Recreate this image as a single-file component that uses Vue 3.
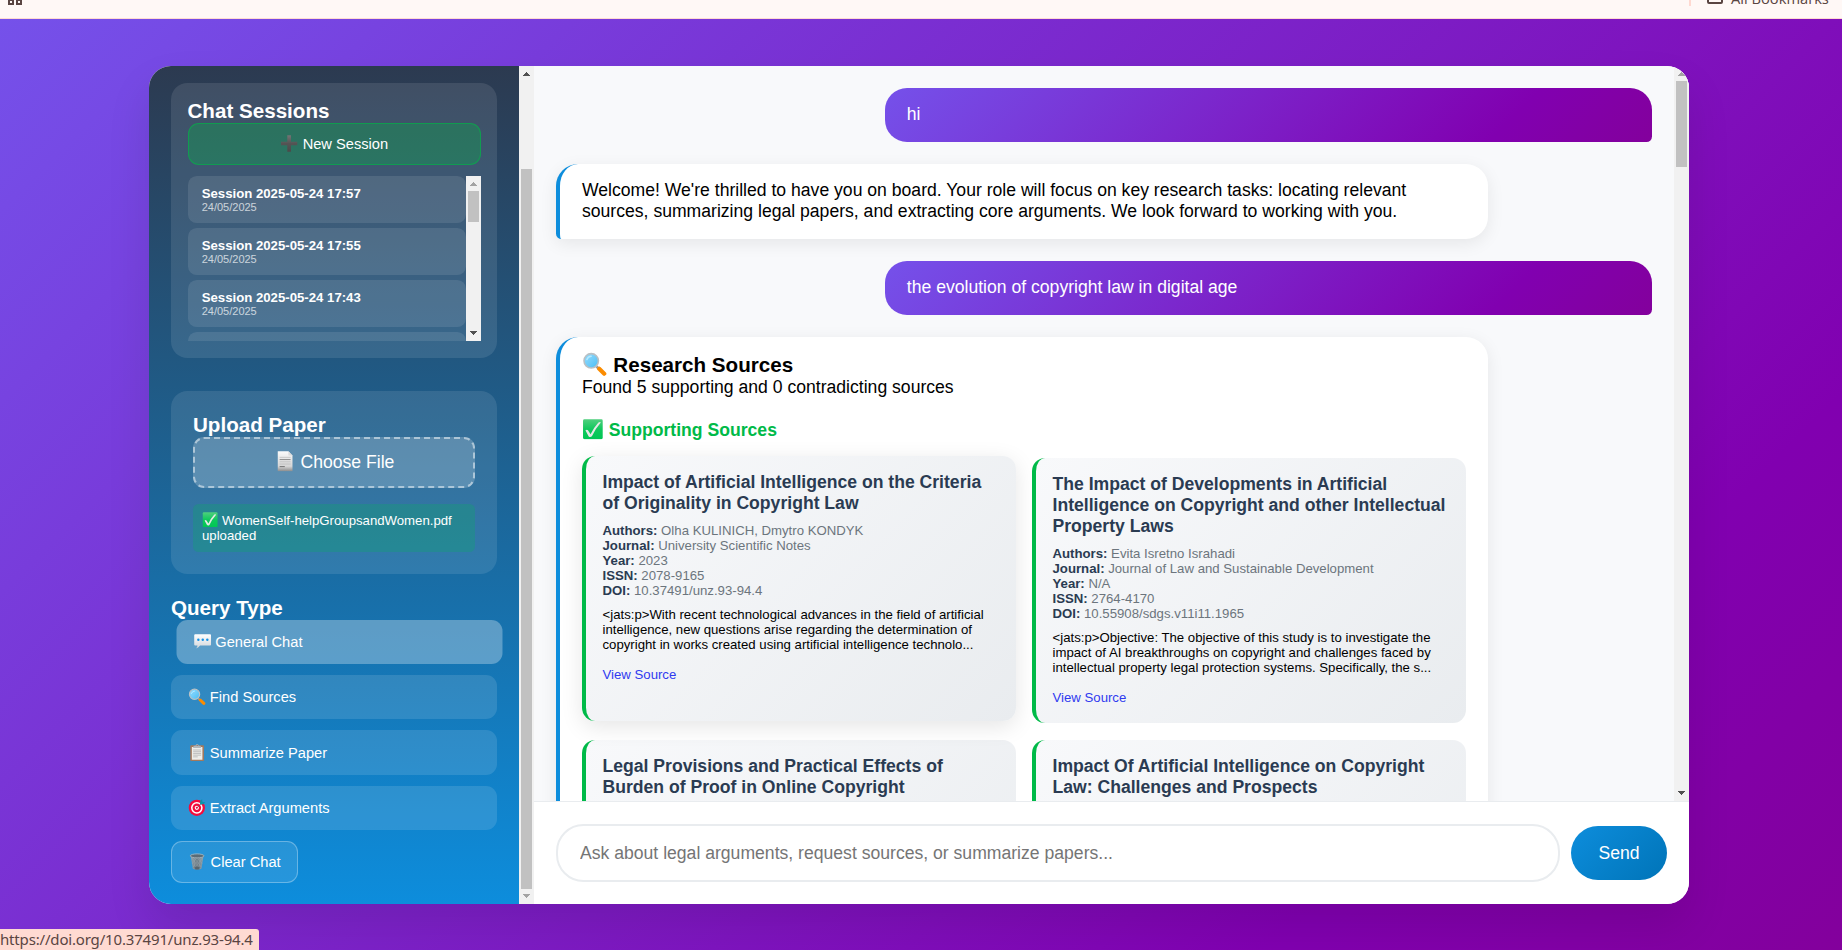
<script setup>
import { ref } from 'vue'

const sessions = ['Session 2025-05-24 17:57', 'Session 2025-05-24 17:55', 'Session 2025-05-24 17:43']
const queries = [
  { icon: 'speech', label: 'General Chat' },
  { icon: 'search', label: 'Find Sources' },
  { icon: 'clipboard', label: 'Summarize Paper' },
  { icon: 'target', label: 'Extract Arguments' },
]
const active = ref('General Chat')
const sources = [
  {
    title: 'Impact of Artificial Intelligence on the Criteria of Originality in Copyright Law',
    meta: { Authors: 'Olha KULINICH, Dmytro KONDYK', Journal: 'University Scientific Notes', Year: '2023', ISSN: '2078-9165', DOI: '10.37491/unz.93-94.4' },
    text: '<jats:p>With recent technological advances in the field of artificial intelligence, new questions arise regarding the determination of copyright in works created using artificial intelligence technolo...',
    lifted: true,
  },
  {
    title: 'The Impact of Developments in Artificial Intelligence on Copyright and other Intellectual Property Laws',
    meta: { Authors: 'Evita Isretno Israhadi', Journal: 'Journal of Law and Sustainable Development', Year: 'N/A', ISSN: '2764-4170', DOI: '10.55908/sdgs.v11i11.1965' },
    text: '<jats:p>Objective: The objective of this study is to investigate the impact of AI breakthroughs on copyright and challenges faced by intellectual property legal protection systems. Specifically, the s...',
  },
  { title: 'Legal Provisions and Practical Effects of Burden of Proof in Online Copyright' },
  { title: 'Impact Of Artificial Intelligence on Copyright Law: Challenges and Prospects' },
]
</script>

<template>
  <div class="window">
    <svg class="defs" width="0" height="0">
      <linearGradient id="g-plus" x1="0" y1="0" x2="0" y2="1"><stop offset="0" stop-color="#747474" /><stop offset=".5" stop-color="#545454" /><stop offset="1" stop-color="#4a4a4a" /></linearGradient>
      <linearGradient id="g-paper" x1="0" y1="0" x2="0" y2="1"><stop offset="0" stop-color="#fafafa" /><stop offset=".75" stop-color="#d6d6d6" /><stop offset="1" stop-color="#8c8c8c" /></linearGradient>
      <linearGradient id="g-check" x1="0" y1="0" x2="0" y2="1"><stop offset="0" stop-color="#4fcf7d" /><stop offset=".5" stop-color="#0fc85c" /><stop offset="1" stop-color="#00c654" /></linearGradient>
      <linearGradient id="g-speech" x1="0" y1="0" x2="0" y2="1"><stop offset="0" stop-color="#ffffff" /><stop offset="1" stop-color="#d2d6da" /></linearGradient>
      <linearGradient id="g-lens" x1="0" y1="0" x2="1" y2="1"><stop offset="0" stop-color="#8fdcff" /><stop offset=".5" stop-color="#72cdf9" /><stop offset="1" stop-color="#45bdf5" /></linearGradient>
      <linearGradient id="g-bin" x1="0" y1="0" x2="1" y2="0"><stop offset="0" stop-color="#93a4ae" /><stop offset=".5" stop-color="#64747e" /><stop offset="1" stop-color="#93a4ae" /></linearGradient>
      <symbol id="i-plus" viewBox="0 0 128 120"><path d="M51 2h26v46h44v24H77v46H51V72H7V48h44z" fill="url(#g-plus)" /></symbol>
      <symbol id="i-doc" viewBox="0 0 128 120">
        <path d="M22 2h62l24 24v92H22z" fill="url(#g-paper)" />
        <path d="M84 2l24 24H84z" fill="#dcdcdc" />
        <path d="M33 37h64M33 63h64M33 76h64" stroke="#b5b5b5" stroke-width="4" />
        <path d="M33 50h64" stroke="#7c7c7c" stroke-width="5" />
        <path d="M33 91h30" stroke="#666" stroke-width="5" />
      </symbol>
      <symbol id="i-check" viewBox="0 0 128 120">
        <rect x="6" y="2" width="115" height="116" rx="8" fill="url(#g-check)" />
        <path d="M20 66q10-6 15 0l15 23Q70 48 96 20q12-5 14 1Q78 57 58 101q-10 8-19 1Z" fill="#e6e8e6" />
      </symbol>
      <symbol id="i-speech" viewBox="0 0 128 120">
        <path d="M12 8h104q7 0 7 7v66q0 7-7 7H46Q36 104 18 108q10-10 10-20H12q-7 0-7-7V15q0-7 7-7z" fill="url(#g-speech)" />
        <circle cx="34" cy="47" r="8.5" fill="#1592e6" /><circle cx="65" cy="47" r="8.5" fill="#1592e6" /><circle cx="97" cy="47" r="8.5" fill="#1592e6" />
      </symbol>
      <symbol id="i-search" viewBox="0 0 128 120">
        <path d="M72 72l14 14" stroke="#9b9b9b" stroke-width="13" />
        <path d="M86 84l25 24" stroke="#fb8c00" stroke-width="21" stroke-linecap="round" />
        <circle cx="46" cy="44" r="36" fill="url(#g-lens)" stroke="#b9c0c4" stroke-width="8" />
        <path d="M24 38q6-16 22-17" fill="none" stroke="#b7eaff" stroke-width="7" stroke-linecap="round" />
      </symbol>
      <symbol id="i-clipboard" viewBox="0 0 128 120">
        <rect x="16" y="8" width="96" height="111" rx="6" fill="#a4795c" />
        <path d="M27 20h74v90H27z" fill="#eeeeea" />
        <path d="M36 42h56M36 54h56M36 66h56M36 78h56M36 90h32" stroke="#aaa" stroke-width="5" />
        <path d="M40 12h13q1-10 11-10t11 10h13l5 16H35z" fill="#b4b8bb" /><circle cx="64" cy="10" r="4" fill="#795548" />
      </symbol>
      <symbol id="i-target" viewBox="0 0 128 120">
        <circle cx="62" cy="62" r="57" fill="#f50a3c" /><circle cx="62" cy="62" r="41" fill="#fff" /><circle cx="62" cy="62" r="30" fill="#f50a3c" /><circle cx="62" cy="62" r="15" fill="#fff" /><circle cx="62" cy="62" r="7" fill="#f50a3c" />
        <path d="M62 62l34-34" stroke="#8b3350" stroke-width="6" />
        <path d="M84 32l2-20L99 2l2 18 20 3-13 14-20 1z" fill="#0796a8" />
      </symbol>
      <symbol id="i-bin" viewBox="0 0 128 120">
        <path d="M20 24l14 86q30 14 60 0l14-86z" fill="url(#g-bin)" />
        <path d="M28 36l60 76M44 34l50 66M66 34l34 42M100 36l-60 76M84 34L34 100M62 34L28 76M64 36v78M42 36l8 78M86 36l-8 78" stroke="#b0bec5" stroke-width="3" opacity=".6" />
        <ellipse cx="64" cy="20" rx="48" ry="14" fill="#5b6c76" stroke="#a7b6be" stroke-width="6" />
        <path d="M44 96l40 0-5 18H49z" fill="#4c5a63" opacity=".7" />
      </symbol>
    </svg>

    <header class="bookmarks">
      <svg class="apps" width="14" height="14" viewBox="0 0 14 14">
        <path d="M1 1h4v4H1zM9 1h4v4H9zM1 9h4v4H1zM9 9h4v4H9z" fill="none" stroke="#5a4542" stroke-width="2" />
      </svg>
      <span class="divider"></span>
      <svg class="folder" width="16" height="14" viewBox="0 0 16 14">
        <path d="M1 12V2q0-1 1-1h4l2 2h6q1 0 1 1v8q0 1-1 1H2q-1 0-1-1z" fill="none" stroke="#5a4542" stroke-width="2" />
      </svg>
      <span class="all">All Bookmarks</span>
    </header>

    <main class="page">
      <div class="app">
        <aside class="sidebar">
          <div class="side-content">
            <section class="panel sessions">
              <h3>Chat Sessions</h3>
              <button class="new"><svg class="emoji"><use href="#i-plus" /></svg> New Session</button>
              <div class="list">
                <div class="items">
                  <div v-for="s in sessions" :key="s" class="item">
                    <b>{{ s }}</b>
                    <small>24/05/2025</small>
                  </div>
                  <div class="item"></div>
                </div>
                <div class="bar">
                  <svg class="arrow" viewBox="0 0 15 15"><path d="M4 10h7v-1h-1v-1h-1v-1h-1v-1h-1v1h-1v1h-1v1h-1z" fill="#a3a3a3" /></svg>
                  <i class="thumb small"></i>
                  <svg class="arrow last" viewBox="0 0 15 15"><path d="M4 5h7v1h-1v1h-1v1h-1v1h-1v-1h-1v-1h-1v-1h-1z" fill="#505050" /></svg>
                </div>
              </div>
            </section>

            <section class="panel upload">
              <h3>Upload Paper</h3>
              <div class="choose"><svg class="emoji"><use href="#i-doc" /></svg> Choose File</div>
              <div class="done"><svg class="emoji"><use href="#i-check" /></svg> WomenSelf-helpGroupsandWomen.pdf uploaded</div>
            </section>

            <section class="query">
              <h3>Query Type</h3>
              <div class="modes">
                <button v-for="q in queries" :key="q.label" class="mode" :class="{ on: active === q.label }" @click="active = q.label"><svg class="emoji"><use :href="'#i-' + q.icon" /></svg> {{ q.label }}</button>
              </div>
              <button class="clear"><svg class="emoji"><use href="#i-bin" /></svg> Clear Chat</button>
            </section>
          </div>
          <div class="bar">
            <svg class="arrow" viewBox="0 0 15 15"><path d="M4 10h7v-1h-1v-1h-1v-1h-1v-1h-1v1h-1v1h-1v1h-1z" fill="#505050" /></svg>
            <i class="thumb side"></i>
            <svg class="arrow last" viewBox="0 0 15 15"><path d="M4 5h7v1h-1v1h-1v1h-1v1h-1v-1h-1v-1h-1v-1h-1z" fill="#a3a3a3" /></svg>
          </div>
        </aside>

        <section class="chat">
          <div class="scroll">
            <div class="messages">
              <div class="user">hi</div>
              <div class="bot">Welcome! We're thrilled to have you on board. Your role will focus on key research tasks: locating relevant sources, summarizing legal papers, and extracting core arguments. We look forward to working with you.</div>
              <div class="user">the evolution of copyright law in digital age</div>
              <div class="bot research">
                <h3><svg class="emoji"><use href="#i-search" /></svg> Research Sources</h3>
                <p>Found 5 supporting and 0 contradicting sources</p>
                <h4><svg class="emoji"><use href="#i-check" /></svg> Supporting Sources</h4>
                <div class="grid">
                  <article v-for="c in sources" :key="c.title" class="card" :class="{ lifted: c.lifted }">
                    <h5>{{ c.title }}</h5>
                    <template v-if="c.meta">
                      <div class="meta">
                        <div v-for="(v, k) in c.meta" :key="k"><b>{{ k }}:</b> {{ v }}</div>
                      </div>
                      <p class="abstract">{{ c.text }}</p>
                      <a>View Source</a>
                    </template>
                  </article>
                </div>
              </div>
            </div>
            <div class="bar">
              <svg class="arrow" viewBox="0 0 15 15"><path d="M4 10h7v-1h-1v-1h-1v-1h-1v-1h-1v1h-1v1h-1v1h-1z" fill="#a3a3a3" /></svg>
              <i class="thumb main"></i>
              <svg class="arrow last" viewBox="0 0 15 15"><path d="M4 5h7v1h-1v1h-1v1h-1v1h-1v-1h-1v-1h-1v-1h-1z" fill="#505050" /></svg>
            </div>
          </div>
          <footer class="compose">
            <input type="text" placeholder="Ask about legal arguments, request sources, or summarize papers..." />
            <button class="send">Send</button>
          </footer>
        </section>
      </div>
    </main>
    <div class="status">https://doi.org/10.37491/unz.93-94.4</div>
  </div>
</template>

<style>
body { margin: 0; overflow: hidden; }
</style>

<style scoped>
* { box-sizing: border-box; }
h3, h4, h5, p { margin: 0; }
button, input { font-family: inherit; margin: 0; }
.defs { position: absolute; }
.emoji { width: 1.245em; height: 1.17em; margin: -.2em 0; vertical-align: baseline; }
.window {
  position: relative;
  width: 1842px;
  height: 950px;
  overflow: hidden;
  display: flex;
  flex-direction: column;
  font-family: "Liberation Sans", Arial, sans-serif;
  font-size: 17.6px;
  line-height: 21px;
  color: #000;
}
.bookmarks {
  flex: none;
  height: 19px;
  overflow: hidden;
  display: flex;
  align-items: flex-start;
  background: #fff8f6;
  border-bottom: 1px solid #ffdad2;
}
.apps { margin: -9px 0 0 8px; }
.divider { width: 2px; height: 6px; margin-left: auto; background: #ffd9d1; }
.folder { margin: -10px 0 0 16px; }
.all {
  margin: -12px 12px 0 8px;
  width: 99px;
  font: 14.7px/20px "Open Sans", "Noto Sans", sans-serif;
  white-space: nowrap;
  color: #5a4542;
}
.page {
  flex: 1;
  padding: 47px 0 0 149px;
  background: linear-gradient(135deg, #7551ea 0%, #8100b0 80%, #83009c 100%);
}
.app {
  display: flex;
  width: 1540px;
  height: 838px;
  border-radius: 22px;
  overflow: hidden;
  background: #fff;
  box-shadow: 0 22px 44px rgba(0, 0, 0, .1);
}
.sidebar { flex: none; display: flex; width: 385px; }
.side-content {
  width: 370px;
  padding: 17px 22px 0;
  color: #fff;
  background: linear-gradient(180deg, #2c3a50 0%, #205a85 38%, #0d8ddc 100%);
}
.bar {
  flex: none;
  display: flex;
  flex-direction: column;
  align-items: center;
  width: 15px;
  background: #f1f1f1;
}
.arrow { flex: none; width: 15px; height: 15px; shape-rendering: crispEdges; }
.last { margin-top: auto; }
.thumb { flex: none; width: 11px; background: #c1c1c1; }
.thumb.small { height: 31px; }
.thumb.side { height: 720px; margin-top: 88px; }
.thumb.main { height: 86px; }
h3 { font-size: 20.6px; line-height: 24px; font-weight: bold; }
.panel { border-radius: 16.5px; background: rgba(255, 255, 255, .1); }
.sessions { height: 275px; padding: 16px 16px 0 16.5px; }
.new {
  display: block;
  width: 100%;
  height: 42px;
  padding: 0;
  border: 1px solid rgba(0, 184, 70, .6);
  border-radius: 11px;
  background: rgba(0, 184, 70, .3);
  color: #fff;
  font-size: 14.67px;
}
.list { display: flex; height: 165px; margin-top: 11px; overflow: hidden; }
.items { flex: 1; display: flex; flex-direction: column; gap: 5px; }
.item {
  flex: none;
  height: 47px;
  padding: 10px 14.2px 0;
  border-radius: 8.8px;
  background: rgba(255, 255, 255, .1);
}
.item b { display: block; font-size: 13.2px; line-height: 15px; }
.item small { display: block; font-size: 11px; line-height: 12px; opacity: .7; }
.upload { height: 183px; margin-top: 33px; padding: 22px; }
.choose {
  height: 51px;
  border: 2px dashed rgba(255, 255, 255, .5);
  border-radius: 11px;
  background: rgba(255, 255, 255, .2);
  line-height: 47px;
  text-align: center;
}
.done {
  height: 48px;
  margin-top: 16px;
  padding: 8.5px 9px;
  border-radius: 5.5px;
  background: rgba(0, 184, 80, .23);
  font-size: 13.2px;
  line-height: 15px;
}
.query { padding-top: 22px; }
.modes { display: flex; flex-direction: column; gap: 11px; margin-bottom: 11px; }
.mode {
  width: 326px;
  height: 44px;
  padding: 0 16.5px;
  border: 0;
  border-radius: 11px;
  background: rgba(255, 255, 255, .12);
  color: #fff;
  font-size: 14.67px;
  text-align: left;
}
.mode:nth-child(3) { height: 45px; padding-top: 1px; }
.mode.on { background: rgba(255, 255, 255, .3); transform: translateX(5.5px); }
.clear {
  width: 127px;
  height: 42px;
  padding: 0;
  border: 1px solid rgba(255, 255, 255, .3);
  border-radius: 11px;
  background: rgba(255, 255, 255, .1);
  color: #fff;
  font-size: 14.67px;
}
.chat { flex: 1; min-width: 0; display: flex; flex-direction: column; }
.scroll { flex: none; display: flex; height: 735px; overflow: hidden; background: #f8f9fb; }
.messages {
  flex: 1;
  display: flex;
  flex-direction: column;
  gap: 22px;
  padding: 22px;
}
.user {
  flex: none;
  align-self: flex-end;
  width: 70%;
  height: 54px;
  padding: 16px 22px;
  border-radius: 22px 22px 5.5px 22px;
  background: linear-gradient(135deg, #7551ea 0%, #8100b0 80%, #83009c 100%);
  color: #fff;
}
.bot {
  flex: none;
  width: 932px;
  min-height: 75px;
  padding: 16px 22px;
  border-left: 4px solid #0d8ddc;
  border-radius: 22px 22px 22px 5.5px;
  background: #fff;
  box-shadow: 0 4.4px 16.5px rgba(0, 0, 0, .08);
}
.research h4 { margin: 22px 0 17px; font-size: 17.6px; line-height: 21px; color: #00ba48; }
.grid { display: grid; grid-template-columns: 434px 434px; gap: 17px 16px; grid-template-rows: 265px 265px; }
.card {
  padding: 16px 16.5px;
  border-left: 4px solid #00ba48;
  border-radius: 13.2px;
  background: linear-gradient(135deg, #f8f9fb, #e9ecef);
}
.card.lifted { transform: translateY(-2px); box-shadow: 0 5.5px 22px rgba(0, 0, 0, .1); }
.card h5 { font-size: 17.6px; line-height: 21px; color: #2a3b52; }
.meta { margin-top: 9px; font-size: 13.2px; line-height: 15px; color: #6c757d; }
.meta b { color: #2a3b52; }
.abstract { margin-top: 9px; font-size: 13.2px; line-height: 15px; }
.card a { display: block; margin-top: 15px; font-size: 13.2px; line-height: 15px; color: #2f3af0; }
.compose {
  flex: 1;
  display: flex;
  align-items: center;
  gap: 11px;
  padding: 0 22px;
  border-top: 1px solid #e9ecef;
  background: #fff;
}
.compose input {
  width: 1004px;
  height: 58px;
  padding: 0 22px;
  border: 2px solid #e9ecef;
  border-radius: 27.5px;
  outline: 0;
  background: #fff;
  font-size: 17.6px;
}
.compose input::placeholder { color: #757575; }
.send {
  width: 96px;
  height: 54px;
  padding: 0;
  border: 0;
  border-radius: 27.5px;
  background: linear-gradient(135deg, #0d8ddc, #0074b8);
  color: #fff;
  font-size: 17.6px;
}
.status {
  position: absolute;
  left: 0;
  bottom: 0;
  width: 259px;
  height: 21px;
  border-top-right-radius: 3px;
  background: #ffdad2;
  color: #5a4542;
  font: 15px/21px "Noto Sans", sans-serif;
  letter-spacing: -.17px;
  white-space: nowrap;
}
</style>
